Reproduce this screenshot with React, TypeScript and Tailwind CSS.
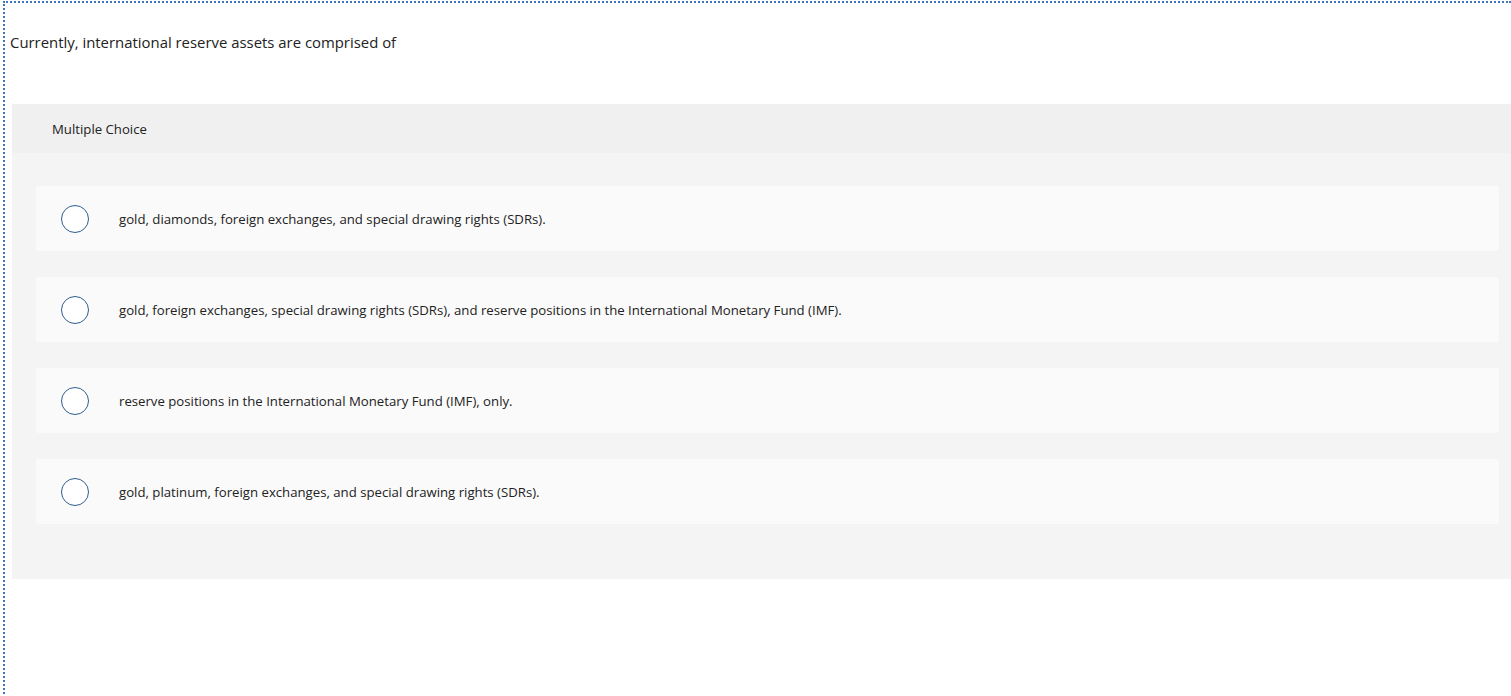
import React from "react";

const options = [
  "gold, diamonds, foreign exchanges, and special drawing rights (SDRs).",
  "gold, foreign exchanges, special drawing rights (SDRs), and reserve positions in the International Monetary Fund (IMF).",
  "reserve positions in the International Monetary Fund (IMF), only.",
  "gold, platinum, foreign exchanges, and special drawing rights (SDRs).",
];

export default function App() {
  return (
    <div className="w-[1511px] h-[696px] overflow-hidden bg-white font-['Open_Sans',sans-serif] text-[#1d1d1d]">
      <div className="ml-[3px] mt-[1px] h-[700px] border-l-2 border-t-2 border-dotted border-[#3f76bd] pl-[5px]">
        <p className="pt-[29px] text-[14.9px] leading-[20px] text-[#222]">
          Currently, international reserve assets are comprised of
        </p>
        <div className="mt-[52px] ml-[2px] bg-[#f4f4f4] rounded-tl-[2px]">
          <div className="h-[49px] bg-[#f0f0f0] pl-[40px] pt-[2px] flex items-center text-[13.2px] text-[#222]">
            Multiple Choice
          </div>
          <div className="pl-[24px] pr-[12px] pt-[33px] pb-[55px] flex flex-col gap-[26px]">
            {options.map((o, i) => (
              <div
                key={i}
                className="h-[65px] bg-[#fafafa] rounded-[3px] flex items-center pl-[25px]"
              >
                <span className="w-[28px] h-[28px] rounded-full border-[1.5px] border-[#2f5e8e] bg-white shrink-0" />
                <span className="ml-[30px] pt-[2px] text-[13.2px] text-[#222]">{o}</span>
              </div>
            ))}
          </div>
        </div>
      </div>
    </div>
  );
}
